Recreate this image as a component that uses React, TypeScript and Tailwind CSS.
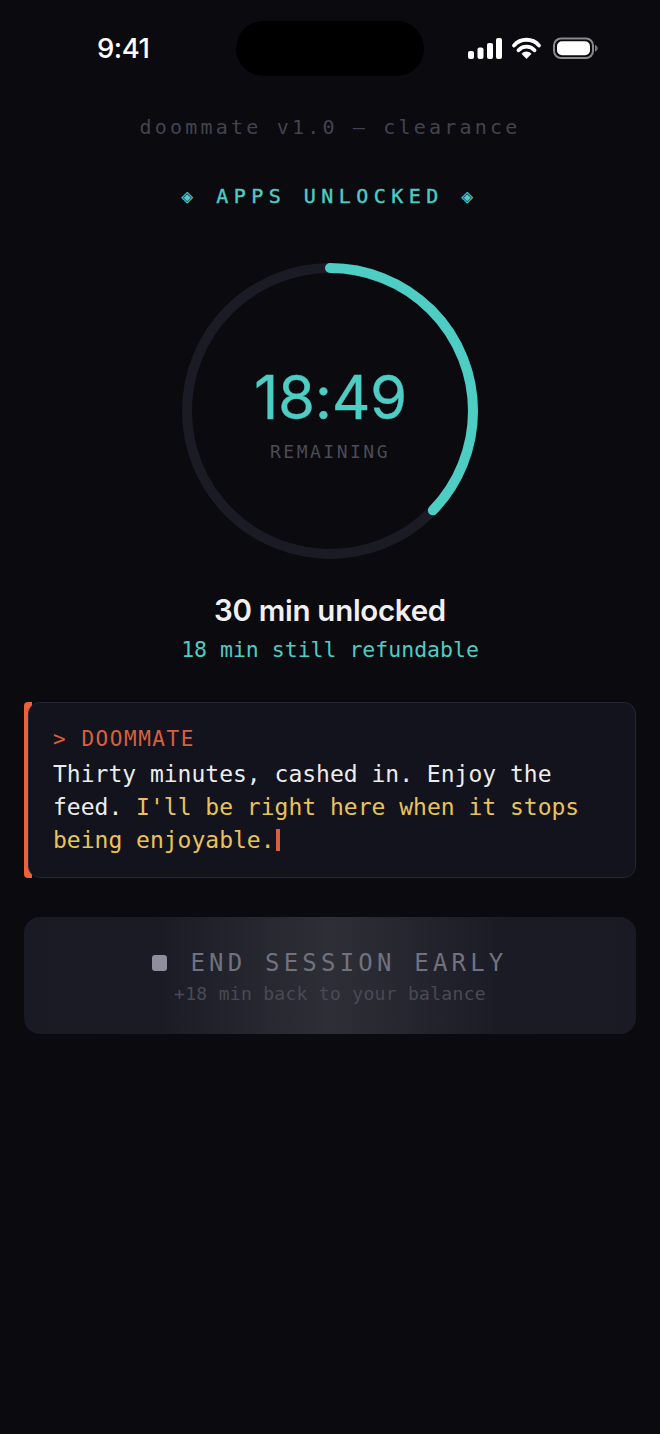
const mono = "font-['DejaVu_Sans_Mono',monospace]";

function StatusBar() {
  return (
    <div className="relative h-[96px] shrink-0">
      <div className="absolute left-[97px] top-[32px] font-['Inter',sans-serif] text-[27.5px] leading-[32px] font-medium tracking-[-0.5px] text-white">9:41</div>
      <div className="absolute left-[236px] top-[21px] h-[55px] w-[188px] rounded-[28px] bg-black" />
      <svg className="absolute left-[466px] top-[36px]" width="134" height="24" viewBox="0 0 134 24" fill="none">
        <rect x="2" y="15" width="6" height="8" rx="2" fill="#fff" />
        <rect x="11.500" y="11.5" width="6" height="11.5" rx="2" fill="#fff" />
        <rect x="21" y="7" width="6" height="16" rx="2" fill="#fff" />
        <rect x="30" y="2" width="6" height="21" rx="2" fill="#fff" />
        <path d="M48 9.500a16.500 16.500 0 0 1 25 0" stroke="#fff" strokeWidth="3.800" strokeLinecap="round" />
        <path d="M52.500 14.300a10.500 10.500 0 0 1 16 0" stroke="#fff" strokeWidth="3.800" strokeLinecap="round" />
        <path d="M60.500 23l-5-5.300a6.800 6.800 0 0 1 10 0z" fill="#fff" />
        <rect x="88" y="2.500" width="39" height="19.500" rx="7" stroke="#8a8a8c" strokeWidth="2" />
        <rect x="91" y="5.200" width="33" height="14" rx="5" fill="#fff" />
        <path d="M129 9v6.500c1.800-.6 2.700-1.800 2.700-3.250S130.800 9.600 129 9z" fill="#77777a" />
      </svg>
    </div>
  );
}

function Ring() {
  const r = 143;
  const c = 2 * Math.PI * r;
  return (
    <div className="relative mx-auto mt-[54px] h-[296px] w-[296px] shrink-0">
      <svg width="296" height="296" viewBox="0 0 296 296" fill="none" className="block">
        <circle cx="148" cy="148" r={r} stroke="#1a1b25" strokeWidth="10" />
        <circle cx="148" cy="148" r={r} stroke="#4ecdc4" strokeWidth="10" strokeLinecap="round" strokeDasharray={`${c * 0.372} ${c}`} transform="rotate(-90 148 148)" />
      </svg>
      <div className="absolute inset-0 flex flex-col items-center">
        <div className="ml-[1px] mt-[98px] font-['Inter',sans-serif] text-[60px] leading-[72px] font-normal tracking-[-0.4px] text-[#4ecdc4] [-webkit-text-stroke:0.3px_#4ecdc4]">18:49</div>
        <div className={`mt-[7px] ${mono} text-[18px] leading-[24px] tracking-[2.5px] text-[#4b4b59]`}>REMAINING</div>
      </div>
    </div>
  );
}

export default function App() {
  return (
    <div className="flex h-[1434px] w-[660px] flex-col overflow-hidden bg-[#0a0a0f]">
      <StatusBar />
      <div className={`mt-[18px] text-center ${mono} text-[20px] leading-[26px] tracking-[3.2px] text-[#43434f]`}>doommate v1.0 — clearance</div>
      <div className={`mt-[43px] text-center ${mono} text-[20px] leading-[26px] tracking-[5.45px] text-[#4ecdc4]`}>
        ◈ <span className="[-webkit-text-stroke:0.4px_#4ecdc4]">APPS UNLOCKED</span> ◈
      </div>
      <Ring />
      <div className="mt-[33px] text-center font-['Inter',sans-serif] text-[29.5px] leading-[36px] font-semibold tracking-[-0.3px] text-[#f0f0f0]">30 min unlocked</div>
      <div className={`mt-[8px] text-center ${mono} text-[21.5px] leading-[28px] text-[#4ecdc4]`}>18 min still refundable</div>

      <div className="mx-[24px] mt-[38px] flex h-[176px]">
        <div className="w-[8px] shrink-0 -mr-[4px] rounded-l-[4px] bg-[#e8623c]" />
        <div className="relative flex-1 rounded-[12px] border border-[#262733] bg-[#12131c] pl-[24px] pr-[24px] pt-[20px]">
          <div className={`${mono} text-[21px] leading-[32px] tracking-[1.55px] text-[#d9603f]`}>&gt; DOOMMATE</div>
          <p className={`mt-[3px] ${mono} text-[23px] leading-[33px] text-[#ececec]`}>
            Thirty minutes, cashed in. Enjoy the<br />
            feed. <span className="text-[#e9c35a]">I'll be right here when it stops<br />being enjoyable.</span>
            <span className="ml-[1px] inline-block h-[22px] w-[4px] translate-y-[3px] bg-[#d9603f]" />
          </p>
        </div>
      </div>

      <div className="mx-[24px] mt-[39px] flex h-[117px] flex-col items-center rounded-[16px] bg-[linear-gradient(90deg,#191a24_0%,#1a1b25_22%,#2e2f36_50%,#1a1b25_78%,#191a24_100%)] pt-[29px]">
        <div className="flex items-center">
          <span className="h-[16px] w-[15px] rounded-[3px] bg-[#8e8e9e]" />
          <span className={`ml-[23px] ${mono} text-[24px] leading-[34px] tracking-[4.2px] text-[#71717f]`}>END SESSION EARLY</span>
        </div>
        <div className={`mt-[2px] ${mono} text-[18px] leading-[23px] tracking-[0.3px] text-[#4a4a55]`}>+18 min back to your balance</div>
      </div>
    </div>
  );
}
